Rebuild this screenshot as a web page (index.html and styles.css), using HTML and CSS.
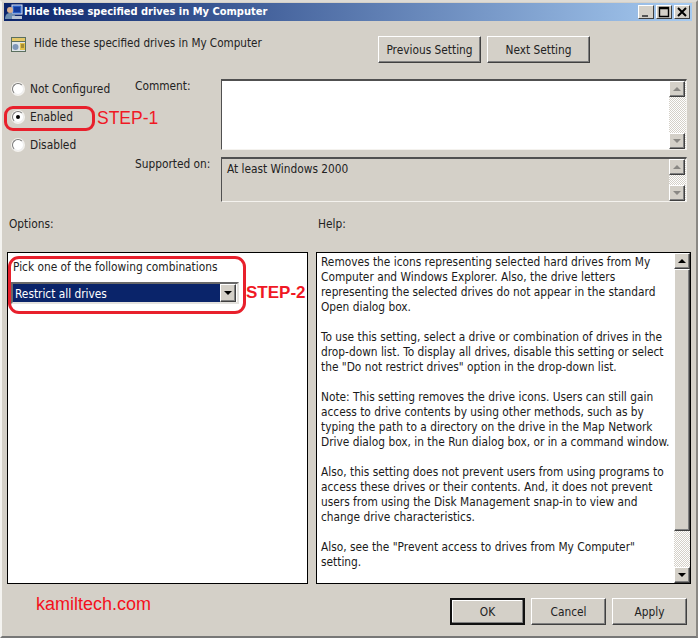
FILE: index.html
```html
<!DOCTYPE html>
<html lang="en">
<head>
<meta charset="utf-8">
<title>Hide these specified drives in My Computer</title>
<link rel="stylesheet" href="styles.css">
</head>
<body>
<div class="dialog">
  <div class="titlebar">
    <svg class="title-icon" width="18" height="16" viewBox="0 0 18 16"><rect x="7" y="1" width="10" height="9" fill="#2a5fc4" stroke="#dfe6f2"/><rect x="9" y="3" width="6" height="5" fill="#123a9a"/><circle cx="5" cy="6" r="3" fill="#d8b090"/><path d="M0 15c0-4 2-6 5-6s6 2 6 6z" fill="#6e8fb0"/><rect x="7" y="12" width="10" height="3" fill="#b8c4d4"/></svg>
    <span class="title-text">Hide these specified drives in My Computer</span>
    <div class="caption-buttons">
      <span class="caption-btn"><svg width="14" height="12" viewBox="0 0 14 12"><rect x="3" y="9" width="6" height="2" fill="#555"/></svg></span>
      <span class="caption-btn"><svg width="14" height="12" viewBox="0 0 14 12"><path d="M2.5 1.5h9v9h-9z M2 2.5h10" fill="none" stroke="#000" stroke-width="1.4"/></svg></span>
      <span class="caption-btn"><svg width="14" height="12" viewBox="0 0 14 12"><path d="M3 2l8 8M11 2l-8 8" stroke="#000" stroke-width="2"/></svg></span>
    </div>
  </div>

  <div class="header">
    <svg class="policy-icon" width="17" height="17" viewBox="0 0 17 17"><rect x="1" y="1" width="15" height="15" fill="#5b6f5f"/><rect x="2" y="2" width="13" height="3" fill="#e4c868"/><rect x="2" y="6" width="13" height="9" fill="#dfe5e8"/><circle cx="5.5" cy="11" r="3" fill="#7f97b8"/><rect x="10" y="7" width="5" height="7" fill="#e3c24a"/><path d="M11 9h3M11 11h3" stroke="#6a5a20"/></svg>
    <span class="header-title">Hide these specified drives in My Computer</span>
    <div class="nav-buttons">
      <span class="btn btn-nav">Previous Setting</span>
      <span class="btn btn-nav">Next Setting</span>
    </div>
  </div>

  <div class="settings">
    <div class="radios">
      <label class="radio-row"><span class="radio"></span>Not Configured</label>
      <label class="radio-row"><span class="radio radio-on"></span>Enabled</label>
      <label class="radio-row"><span class="radio"></span>Disabled</label>
    </div>
    <div class="fields">
      <div class="field field-comment">
        <span class="field-label label-comment">Comment:</span>
        <div class="sunken sunken-white">
          <div class="sunken-body"></div>
          <div class="scroll-dither">
            <span class="arrow-btn"><span class="tri tri-up tri-grey"></span></span>
            <span class="arrow-btn"><span class="tri tri-down tri-grey"></span></span>
          </div>
        </div>
      </div>
      <div class="field field-support">
        <span class="field-label">Supported on:</span>
        <div class="sunken">
          <div class="sunken-body support-text">At least Windows 2000</div>
          <div class="scroll-dither">
            <span class="arrow-btn"><span class="tri tri-up tri-grey"></span></span>
            <span class="arrow-btn"><span class="tri tri-down tri-grey"></span></span>
          </div>
        </div>
      </div>
    </div>
  </div>

  <div class="section-labels">
    <span class="section-options">Options:</span>
    <span>Help:</span>
  </div>

  <div class="panels">
    <div class="panel panel-options">
      <div class="pick-label">Pick one of the following combinations</div>
      <div class="select">
        <span class="select-value">Restrict all drives</span>
        <span class="arrow-btn select-arrow"><span class="tri tri-down"></span></span>
      </div>
    </div>
    <div class="panel panel-help">
      <div class="help-text">
        <p>Removes the icons representing selected hard drives from My<br>Computer and Windows Explorer. Also, the drive letters<br>representing the selected drives do not appear in the standard<br>Open dialog box.</p>
        <p>To use this setting, select a drive or combination of drives in the<br>drop-down list. To display all drives, disable this setting or select<br>the "Do not restrict drives" option in the drop-down list.</p>
        <p>Note: This setting removes the drive icons. Users can still gain<br>access to drive contents by using other methods, such as by<br>typing the path to a directory on the drive in the Map Network<br>Drive dialog box, in the Run dialog box, or in a command window.</p>
        <p>Also, this setting does not prevent users from using programs to<br>access these drives or their contents. And, it does not prevent<br>users from using the Disk Management snap-in to view and<br>change drive characteristics.</p>
        <p>Also, see the "Prevent access to drives from My Computer"<br>setting.</p>
      </div>
      <div class="help-scroll">
        <span class="arrow-btn"><span class="tri tri-up"></span></span>
        <span class="thumb"></span>
        <span class="track-rest"></span>
        <span class="arrow-btn"><span class="tri tri-down"></span></span>
      </div>
    </div>
  </div>

  <div class="footer">
    <span class="watermark">kamiltech.com</span>
    <div class="footer-buttons">
      <span class="btn btn-foot btn-default">OK</span>
      <span class="btn btn-foot">Cancel</span>
      <span class="btn btn-foot">Apply</span>
    </div>
  </div>

  <div class="ring ring-1"></div>
  <div class="ring ring-2"></div>
  <span class="step step-1">STEP-1</span>
  <span class="step step-2">STEP-2</span>
</div>
</body>
</html>
```

FILE: styles.css
```css
* { box-sizing: border-box; }
html, body { margin: 0; padding: 0; }
body { width: 698px; height: 638px; overflow: hidden; background: #d4d0c8; }

.dialog {
  position: relative;
  width: 698px;
  height: 638px;
  background: #d4d0c8;
  border-left: 2px solid #f4f3f0;
  border-top: 2px solid #dedbd5;
  border-right: 2px solid #8a8884;
  border-bottom: 2px solid #777;
  padding: 1px 4px 0 2px;
  font-family: "DejaVu Sans", "Noto Sans", sans-serif;
  font-stretch: condensed;
  font-size: 11.8px;
  color: #222;
  line-height: 16px;
}

.titlebar {
  height: 18px;
  display: flex;
  align-items: center;
  background: linear-gradient(90deg, #0a246a 0%, #a6caf0 100%);
  color: #fff;
  font-weight: 700;
  font-size: 11px;
  padding-left: 1px;
}
.title-icon { flex: none; margin-right: 1px; }
.title-text { white-space: nowrap; }
.caption-buttons { margin-left: auto; display: flex; gap: 2px; padding-right: 2px; }
.caption-btn {
  width: 16px;
  height: 14px;
  background: #d4d0c8;
  border: 1px solid;
  border-color: #fff #404040 #404040 #fff;
  display: flex;
  align-items: center;
  justify-content: center;
}
.caption-btn svg { display: block; flex: none; }

.header {
  height: 42px;
  display: flex;
  align-items: flex-start;
  padding: 15px 0 0 6px;
}
.policy-icon { flex: none; margin: 0 7px 0 0; }
.header-title { line-height: 14px; white-space: nowrap; font-size: 11.6px; }
.nav-buttons { margin-left: auto; margin-right: 102px; display: flex; gap: 6px; }

.btn {
  display: flex;
  align-items: center;
  justify-content: center;
  background: #d4d0c8;
  border: 1px solid;
  border-color: #fff #404040 #404040 #fff;
  box-shadow: inset -1px -1px 0 #808080;
  white-space: nowrap;
}
.btn-nav { width: 103px; height: 27px; }

.settings {
  display: flex;
  padding-top: 16px;
  height: 143px;
}
.radios {
  width: 131px;
  padding: 2px 0 0 8px;
  display: flex;
  flex-direction: column;
  gap: 12px;
}
.radio-row { display: flex; align-items: center; gap: 6px; height: 16px; white-space: nowrap; }
.radio {
  width: 12px;
  height: 12px;
  border-radius: 50%;
  background: #fff;
  border: 1px solid #777;
  border-right-color: #eee;
  border-bottom-color: #eee;
  box-shadow: 0 0 0 1px #f4f2ee;
  display: flex;
  align-items: center;
  justify-content: center;
  flex: none;
}
.radio-on::after { content: ""; width: 4px; height: 4px; border-radius: 50%; background: #000; }

.fields { flex: 1; display: flex; flex-direction: column; gap: 7px; }
.field { display: flex; }
.field-comment { height: 71px; }
.field-support { height: 45px; }
.field-label { width: 86px; flex: none; line-height: 14px; white-space: nowrap; }
.sunken {
  width: 466px;
  flex: none;
  display: flex;
  border: 1px solid;
  border-color: #505050 #f4f2ee #f4f2ee #505050;
  border-top-width: 2px;
}
.sunken-body { flex: 1; min-width: 0; }
.sunken-white .sunken-body { background: #fff; }
.support-text { padding: 2px 5px; }
.scroll-dither {
  width: 17px;
  flex: none;
  display: flex;
  flex-direction: column;
  justify-content: space-between;
  background-color: #e6e4df;
  background-image: repeating-conic-gradient(#ffffff 0 25%, #d4d0c8 0 50%);
  background-size: 2px 2px;
}

.arrow-btn {
  width: 16px;
  height: 16px;
  flex: none;
  background: #d4d0c8;
  border: 1px solid;
  border-color: #fff #404040 #404040 #fff;
  box-shadow: inset -1px -1px 0 #808080;
  display: flex;
  align-items: center;
  justify-content: center;
}
.tri { width: 0; height: 0; border-left: 4px solid transparent; border-right: 4px solid transparent; }
.tri-up { border-bottom: 4px solid #000; }
.tri-down { border-top: 4px solid #000; }
.tri-up.tri-grey { border-bottom-color: #8a8884; }
.tri-down.tri-grey { border-top-color: #8a8884; }

.section-labels {
  display: flex;
  padding: 10px 0 0 5px;
  height: 46px;
}
.section-options { width: 309px; }

.panels { display: flex; height: 332px; padding-left: 3px; gap: 8px; }
.panel { background: #fff; border: 1px solid #000; }
.panel-options { width: 301px; padding: 6px 3px; }
.panel-help { width: 375px; display: flex; }
.pick-label { white-space: nowrap; line-height: 16px; padding-left: 2px; }
.select {
  margin-top: 7px;
  height: 22px;
  width: 228px;
  display: flex;
  align-items: stretch;
  background: #fff;
  border: 2px solid;
  border-color: #6a6a6a #e4e2de #e4e2de #6a6a6a;
  padding-right: 1px;
}
.select-value {
  flex: 1;
  background: #0a246a;
  color: #fff;
  padding-left: 2px;
  line-height: 20px;
}
.select-arrow { width: 16px; height: 18px; }

.help-text { flex: 1; padding: 2px 0 0 4px; min-width: 0; white-space: nowrap; line-height: 15px; color: #1a1a1a; }
.help-text p { margin: 0 0 15px; }
.help-scroll {
  width: 16px;
  flex: none;
  display: flex;
  flex-direction: column;
  background-color: #e6e4df;
  background-image: repeating-conic-gradient(#ffffff 0 25%, #d4d0c8 0 50%);
  background-size: 2px 2px;
}
.thumb {
  height: 262px;
  background: #d4d0c8;
  border: 1px solid;
  border-color: #fff #404040 #404040 #fff;
  box-shadow: inset -1px -1px 0 #808080;
}
.track-rest { flex: 1; }

.footer { display: flex; padding-top: 14px; }
.watermark {
  margin: -4px 0 0 32px;
  font-family: "Liberation Sans", Arial, sans-serif;
  font-size: 18px;
  line-height: 20px;
  color: #f4101c;
}
.footer-buttons { margin-left: auto; margin-right: 5px; display: flex; gap: 6px; }
.btn-foot { width: 75px; height: 27px; }
.btn-default { border: 2px solid #111; box-shadow: inset -1px -1px 0 #808080, inset 1px 1px 0 #fff; }

.ring {
  position: absolute;
  border: 3px solid #e8202c;
  pointer-events: none;
}
.ring-1 { left: 2px; top: 104px; width: 91px; height: 25px; border-radius: 9px; }
.ring-2 { left: 6px; top: 254px; width: 238px; height: 58px; border-radius: 11px; }
.step {
  position: absolute;
  font-family: "Liberation Sans", Arial, sans-serif;
  font-size: 17.5px;
  line-height: 20px;
  color: #f01824;
  white-space: nowrap;
}
.step-1 { left: 95px; top: 106px; }
.step-2 { left: 244px; top: 281px; font-weight: 700; font-size: 17px; }
```
